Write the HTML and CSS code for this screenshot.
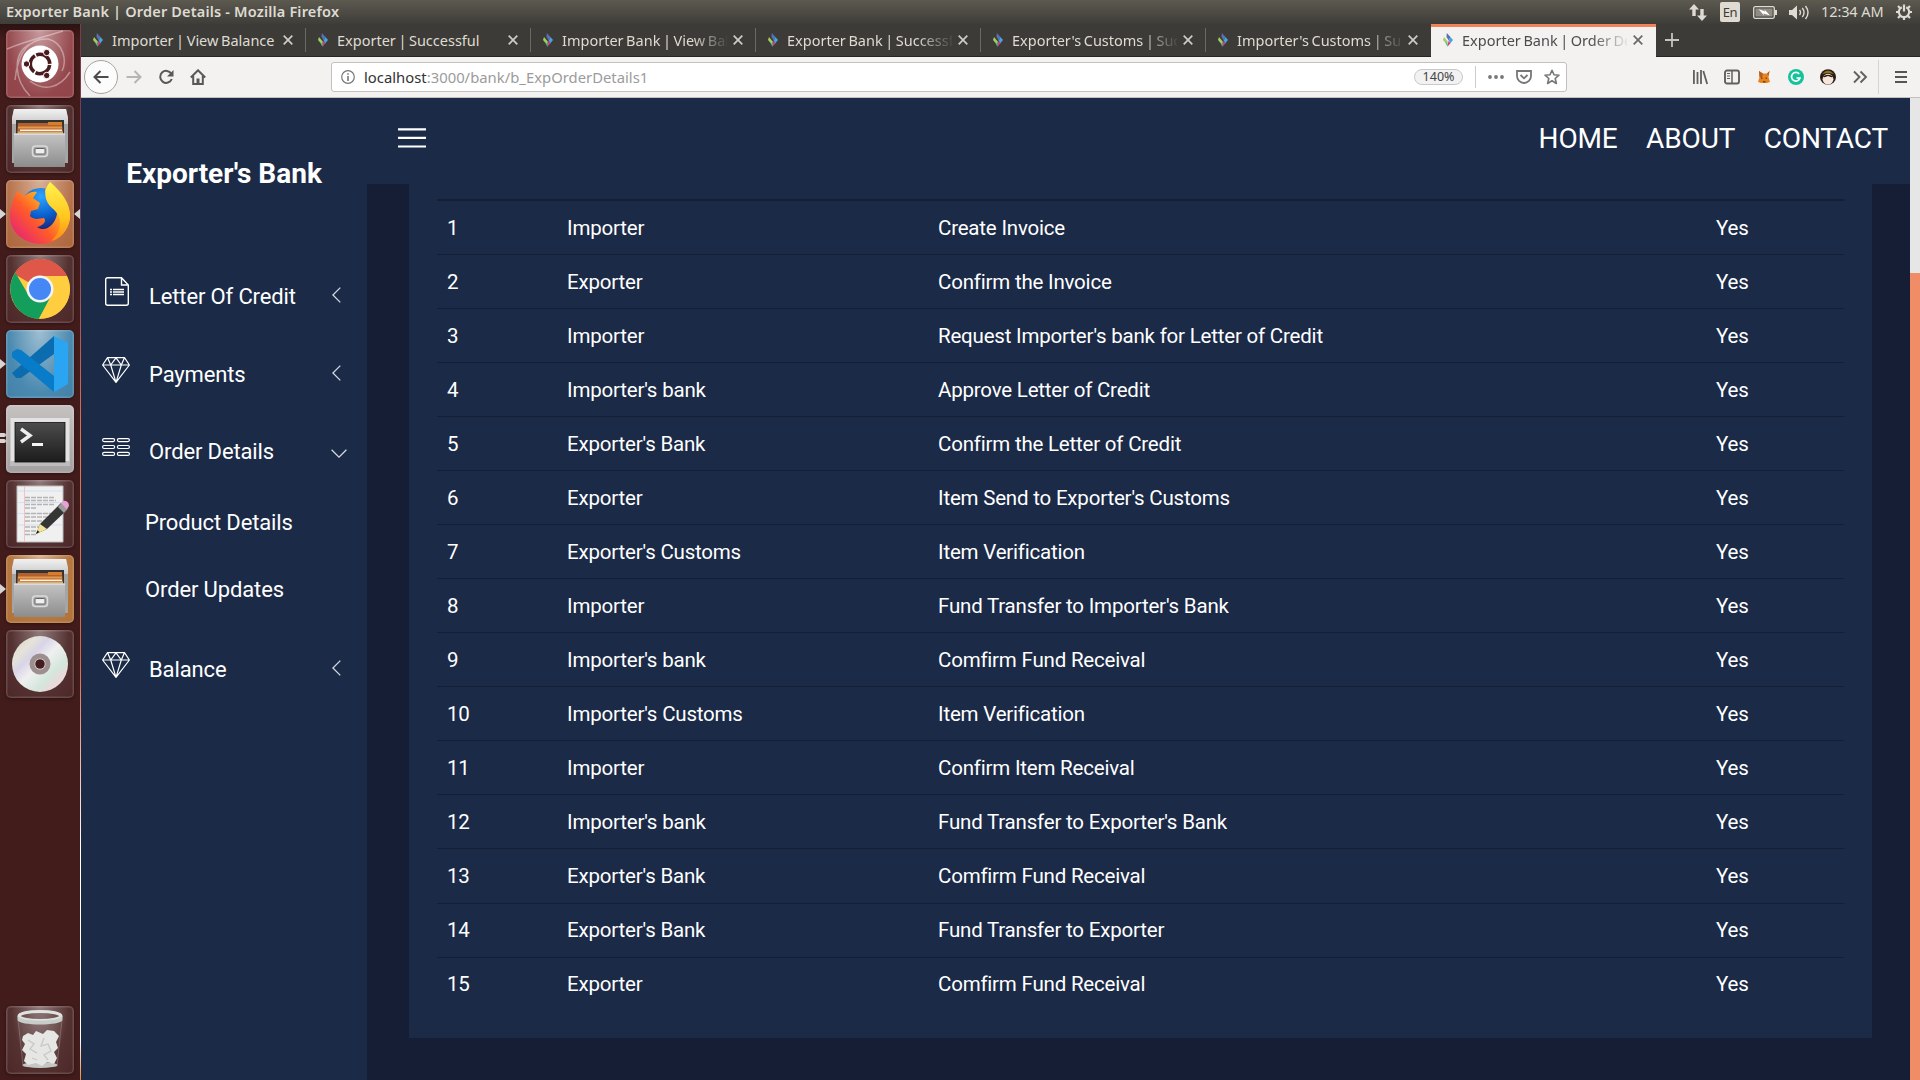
FILE: index.html
```html
<!DOCTYPE html>
<html lang="en">
<head>
<meta charset="utf-8">
<title>Exporter Bank | Order Details</title>
<link rel="stylesheet" href="styles.css">
</head>
<body>
<svg class="defs" aria-hidden="true">
  <defs>
    <linearGradient id="metal" x1="0" y1="0" x2="0" y2="1"><stop offset="0" stop-color="#c4c4c4"/><stop offset="1" stop-color="#8c8c8c"/></linearGradient>
    <linearGradient id="lid" x1="0" y1="0" x2="0" y2="1"><stop offset="0" stop-color="#f2f2f2"/><stop offset="1" stop-color="#c9c9c9"/></linearGradient>
    <linearGradient id="fire" x1="1" y1="0" x2="0" y2="1"><stop offset="0" stop-color="#fff04a"/><stop offset=".35" stop-color="#ffb01f"/><stop offset=".6" stop-color="#ff5a2a"/><stop offset="1" stop-color="#e0148c"/></linearGradient>
    <radialGradient id="globe" cx=".5" cy=".2" r=".9"><stop offset="0" stop-color="#2fa4ff"/><stop offset=".5" stop-color="#0a62d0"/><stop offset="1" stop-color="#1b1464"/></radialGradient>
    <linearGradient id="tail" x1="0" y1="0" x2="0" y2="1"><stop offset="0" stop-color="#fff24f"/><stop offset=".6" stop-color="#ffc61e"/><stop offset="1" stop-color="#ff8a16"/></linearGradient>
    <linearGradient id="screen" x1="0" y1="0" x2="0" y2="1"><stop offset="0" stop-color="#4c4c4c"/><stop offset="1" stop-color="#1c1c1c"/></linearGradient>
    <linearGradient id="disc" x1="0" y1="0" x2="1" y2="1"><stop offset="0" stop-color="#cfcfcf"/><stop offset=".22" stop-color="#e6e4d8"/><stop offset=".35" stop-color="#d9d4e6"/><stop offset=".5" stop-color="#f0f0f0"/><stop offset=".7" stop-color="#d3e6dc"/><stop offset=".8" stop-color="#e8dada"/><stop offset="1" stop-color="#e4e4e4"/></linearGradient>
    <symbol id="favicon" viewBox="0 0 10 14"><path d="M3.800 0 7.500 4 5.800 7.500 3.500 4Z" fill="#5a6fb4"/><path d="M7.500 4 10 7 7.200 10.500 5.800 7.500Z" fill="#4aa3dc"/><path d="M1 4 4.800 8.500 4.300 12 0 7Z" fill="#a4cf5c"/><path d="M2 9 4.800 11 4.500 14Z" fill="#4fbf8a"/><path d="M5.300 8 7.500 10.300 4.600 13.500Z" fill="#d23c96"/></symbol>
    <symbol id="close" viewBox="0 0 10 10"><path d="M.7.7 9.300 9.300M9.300.7.7 9.300" fill="none" stroke="currentColor" stroke-width="1.700"/></symbol>
    <symbol id="diamond" viewBox="0 0 28 26"><path d="M5.500.6H22.500L27.400 8 14 25.400.6 8ZM.6 8H27.400M5.500.6 8.700 8 14 25.400 19.300 8 22.500.6M8.700 8 14 .8 19.300 8" fill="none" stroke="currentColor" stroke-width="1.200" stroke-linejoin="round"/></symbol>
    <symbol id="chev-left" viewBox="0 0 9 16"><path d="M8.300.6.9 8l7.400 7.400" fill="none" stroke="currentColor" stroke-width="1.300"/></symbol>
    <symbol id="cabinet" viewBox="0 0 68 68">
      <path d="M8 4H60L62 13V58H6V13Z" fill="#a5a5a5"/><path d="M8 4H60L62 13V19H6V13Z" fill="url(#lid)"/>
      <path d="M10 15H58V30H10Z" fill="#333"/><path d="M12 18H56L57 29H11Z" fill="#b3602e"/><path d="M42 17H56V20H42Z" fill="#d87e2a"/><path d="M12 21.500H56V23.500H12Z" fill="#e39a4e"/><path d="M14 24.500H56V26H14Z" fill="#fff3dc"/><path d="M12 26.500H57V29H12Z" fill="#dcae6c"/>
      <path d="M8 28.500H59V62H8Z" fill="url(#metal)"/><path d="M8 28.500H59V30H8Z" fill="#dadada"/>
      <rect x="26.500" y="41" width="15" height="10.500" rx="3" fill="#a8a8a8" stroke="#dcdcdc" stroke-width="1.500"/><rect x="29" y="43.500" width="10" height="5.500" rx="1" fill="#efefef" stroke="#666"/>
    </symbol>
  </defs>
</svg>

<header class="panel">
  <div class="panel-title">Exporter Bank | Order Details - Mozilla Firefox</div>
  <div class="tray">
    <svg class="tray-net" width="18" height="17" viewBox="0 0 18 17" fill="#dfdbd2"><path d="M5 0 10 5.500H6.700V12H3.300V5.500H0ZM13 17 8 11.500H11.300V5H14.700V11.500H18Z"/></svg>
    <span class="tray-lang">En</span>
    <svg class="tray-bat" width="24" height="13" viewBox="0 0 24 13"><rect x=".7" y=".7" width="20.600" height="11.600" rx="1.500" fill="none" stroke="#dfdbd2" stroke-width="1.300"/><rect x="2.500" y="2.500" width="17" height="8" fill="#8f8c84"/><path d="M22 4h2v5h-2z" fill="#dfdbd2"/><path d="M5.500 3 12 5.500 11.500 3.500 17 9.500 10.500 7.500 11 9.500Z" fill="#fff"/></svg>
    <svg class="tray-vol" width="21" height="15" viewBox="0 0 21 15"><path d="M0 5h3l5-4.500v14L3 10H0z" fill="#dfdbd2"/><path d="M10.500 5q2 2.500 0 5M13.300 3q3.500 4.500 0 9M16.500 1q5 6.500 0 13" fill="none" stroke="#dfdbd2" stroke-width="1.400"/></svg>
    <span class="tray-clock">12:34 AM</span>
    <svg width="16" height="16" viewBox="0 0 16 16" fill="none" stroke="#dfdbd2"><path d="M5.800 3.300A5.200 5.200 0 1 0 10.200 3.300" stroke-width="2.200"/><path d="M8 .5V7.500" stroke-width="2.200"/><path d="M4 4 2 2M12 4 14 2M3 8H0M13 8H16M4 12 2 14M12 12 14 14M8 13V16" stroke-width="2.200"/></svg>
  </div>
</header>

<div class="desktop">
  <nav class="launcher">
    <div class="tile tile-dash"><svg viewBox="0 0 68 68"><path d="M9 50C12 20 25 8 42 9 58 13 61 31 56 41M24 66C9 51 5 24 24 14M64 42C54 58 38 62 24 51M1 19C20 11 38 7 57 1" fill="none" stroke="#fff" stroke-opacity=".38" stroke-width="1.500"/><circle cx="34" cy="34" r="18.500" fill="#fff"/><circle cx="34" cy="34" r="9.700" fill="none" stroke="#4b1a20" stroke-width="3.600" stroke-dasharray="18.800 1.500" stroke-dashoffset="-1"/><g fill="#4b1a20" stroke="#fff" stroke-width="1"><circle cx="20.500" cy="34" r="3.200"/><circle cx="40.700" cy="22.500" r="3.200"/><circle cx="40.700" cy="45.500" r="3.200"/></g></svg></div>
    <div class="tile"><svg viewBox="0 0 68 68"><use href="#cabinet"/></svg></div>
    <div class="tile tile-fox"><i class="pip"></i><i class="pip pip-right"></i><svg viewBox="0 0 68 68"><circle cx="35" cy="29" r="21" fill="url(#globe)"/><path d="M8 18 11 11 18 16C23 12 28 11 31 12L27 18 34 23 32 29 25 31 24 36C28 40 32 39 38 38 41 41 37 46 31 47 39 53 49 45 51 34 51 22 38 18 39 10L44 2C56 12 65 24 64 38 62 53 50 64 35 64 17 63 4 52 4 36 4 29 6 25 8 18Z" fill="url(#fire)"/><path d="M44 2C55 12 65 25 64 38 62 51 54 59 45 61 58 49 56 36 46 28 38 21 37 10 44 2Z" fill="url(#tail)"/></svg></div>
    <div class="tile"><svg viewBox="0 0 68 68"><circle cx="34" cy="34" r="29.800" fill="#ffcd40"/><path d="M34 34 8.200 19.100A29.800 29.800 0 0 1 61 21H34Z" fill="#de5748"/><path d="M45 41 33 63.800A29.800 29.800 0 0 1 9.300 17.500L23 41 34 47Z" fill="#149e5b"/><path d="M34 21H61A29.800 29.800 0 0 1 33 63.800L45.500 41Z" fill="#ffcd40"/><circle cx="34" cy="34" r="13.500" fill="#f4f4f4"/><circle cx="34" cy="34" r="11" fill="#4587f4"/></svg></div>
    <div class="tile tile-code"><i class="pip"></i><svg viewBox="0 0 68 68"><path d="M48 6 6 43 10 48 15 48 48 24Z" fill="#0b6db0"/><path d="M6 22 11 19 15 20 48 46V62L6 27Z" fill="#087bc9"/><path d="M48 6 62 13V54L48 62Z" fill="#2aa5f2"/></svg></div>
    <div class="tile tile-term"><i class="pip pip-bar"></i><i class="pip pip-bar pip-low"></i><svg viewBox="0 0 68 68"><rect x="4.500" y="13" width="59" height="48" fill="#e2e2e2"/><path d="M4.500 61H63.500V56H4.500Z" fill="#bcbcbc"/><rect x="9" y="17.500" width="50" height="39.500" fill="url(#screen)" stroke="#111" stroke-width=".8"/><path d="M15 24 24 30.500 15 37" fill="none" stroke="#eee" stroke-width="3.400"/><path d="M26 38H37V41H26Z" fill="#f4f4f4"/></svg></div>
    <div class="tile"><svg viewBox="0 0 68 68"><path d="M11 6H57V62H11Z" fill="#f0f0f0" stroke="#bbb"/><path d="M12 11H56M12 22.500H56M12 33.500H56M12 45H56" stroke="#d3dff2"/><path d="M18.500 6V62" stroke="#f4c2c2"/><path d="M19 17.500H48M19 20.500H50M19 24.500H49M19 28H30M19 33.500H50M19 37H48M19 41H45M19 47H38M19 51H34M19 54.500H31" stroke="#b4b4b4" stroke-width="1.300" stroke-dasharray="5 1"/><path d="M30 54 34 44 55 23 62 29 41 49Z" fill="#353535"/><path d="M30 54 34 44 41 49Z" fill="#f2e396"/><path d="M30 54 31.500 50.500 33.500 52Z" fill="#111"/><path d="M52 27 56 22.500 62 28.500 58 33Z" fill="#9d9d9d"/><path d="M55 23 57 21C61 20 64 24 62.500 27L60.500 29Z" fill="#e7a0d6"/></svg></div>
    <div class="tile tile-files"><i class="pip"></i><svg viewBox="0 0 68 68"><use href="#cabinet"/></svg></div>
    <div class="tile"><svg viewBox="0 0 68 68"><circle cx="34" cy="34" r="28" fill="url(#disc)"/><circle cx="34" cy="34" r="8" fill="none" stroke="#9d8f8f" stroke-width="5"/><circle cx="34" cy="34" r="4.800" fill="#451d1f"/></svg></div>
    <div class="tile tile-trash"><svg viewBox="0 0 68 68"><path d="M12 14 17 60H51L56 14Z" fill="#fff" fill-opacity=".05" stroke="#fff" stroke-opacity=".2"/><ellipse cx="34" cy="59" rx="17.500" ry="3" fill="#c3c8c4"/><path d="M17 30 22 27 27 29 30 25 37 28 41 24 48 25 53 30 50 36 52 42 48 46 51 52 48 58 41 56 36 60 30 57 22 59 18 55 20 48 16 44 19 38 16 34Z" fill="#e6e6e4"/><path d="M22 34 28 38 24 43 31 47M38 32 35 40 42 38 45 45 38 49 42 54M26 52 31 54" fill="none" stroke="#c8c8c6" stroke-width="1.300"/><ellipse cx="34" cy="10" rx="21" ry="4.500" fill="none" stroke="#dfe3df" stroke-width="3"/><path d="M11.500 10V14C13 20 55 20 56.500 14V10C53 16 15 16 11.500 10Z" fill="#c9cdc9"/></svg></div>
  </nav>

  <div class="browser">
    <div class="tabs">
      <div class="tab"><svg class="fav"><use href="#favicon"/></svg><span class="tab-label">Importer | View Balance</span><svg class="x"><use href="#close"/></svg></div>
      <div class="tab"><svg class="fav"><use href="#favicon"/></svg><span class="tab-label">Exporter | Successful</span><svg class="x"><use href="#close"/></svg></div>
      <div class="tab"><svg class="fav"><use href="#favicon"/></svg><span class="tab-label fade">Importer Bank | View Balance</span><svg class="x"><use href="#close"/></svg></div>
      <div class="tab"><svg class="fav"><use href="#favicon"/></svg><span class="tab-label fade">Exporter Bank | Successful</span><svg class="x"><use href="#close"/></svg></div>
      <div class="tab"><svg class="fav"><use href="#favicon"/></svg><span class="tab-label fade">Exporter's Customs | Successful</span><svg class="x"><use href="#close"/></svg></div>
      <div class="tab"><svg class="fav"><use href="#favicon"/></svg><span class="tab-label fade">Importer's Customs | Successful</span><svg class="x"><use href="#close"/></svg></div>
      <div class="tab active"><svg class="fav"><use href="#favicon"/></svg><span class="tab-label fade">Exporter Bank | Order Details</span><svg class="x"><use href="#close"/></svg></div>
      <svg class="newtab" width="14" height="14" viewBox="0 0 14 14"><path d="M7 0V14M0 7H14" stroke="#c6c4be" stroke-width="1.800"/></svg>
    </div>

    <div class="toolbar">
      <div class="nav-buttons">
        <span class="back"><svg width="16" height="16" viewBox="0 0 16 16"><path d="M15.500 8H1.500M7.500 2 1.500 8l6 6" fill="none" stroke="#4c4c4c" stroke-width="2"/></svg></span>
        <svg width="16" height="16" viewBox="0 0 16 16"><path d="M.5 8H14.500M8.500 2l6 6-6 6" fill="none" stroke="#b6b5b3" stroke-width="2"/></svg>
        <svg width="16" height="16" viewBox="0 0 16 16"><path d="M13.300 4.700A6 6 0 1 0 13.800 10" fill="none" stroke="#585858" stroke-width="2"/><path d="M15.500 1V7.500H9Z" fill="#585858"/></svg>
        <svg width="16" height="16" viewBox="0 0 16 16"><path d="M.8 8.500 8 1.300 15.200 8.500M3.200 7V15H12.800V7" fill="none" stroke="#585858" stroke-width="2"/><path d="M6.500 9.500h3V15h-3z" fill="#585858"/></svg>
      </div>
      <div class="urlbar">
        <svg class="info" width="14" height="14" viewBox="0 0 14 14"><circle cx="7" cy="7" r="6.300" fill="none" stroke="#777" stroke-width="1.200"/><path d="M6.200 6h1.600v5H6.200zM6.200 3.200h1.600v1.600H6.200z" fill="#777"/></svg>
        <span class="url"><b>localhost</b>:3000/bank/b_ExpOrderDetails1</span>
        <span class="zoom">140%</span>
        <span class="url-sep"></span>
        <svg width="16" height="16" viewBox="0 0 16 16" fill="#777"><circle cx="2" cy="8" r="1.900"/><circle cx="8" cy="8" r="1.900"/><circle cx="14" cy="8" r="1.900"/></svg>
        <svg width="16" height="16" viewBox="0 0 16 16" fill="none" stroke="#777" stroke-width="1.800"><path d="M1 2H15V7A7 7 0 0 1 1 7Z"/><path d="M4.500 6 8 9.300 11.500 6"/></svg>
        <svg width="16" height="16" viewBox="0 0 16 16"><path d="M8 1.300 10 5.800 15 6.200 11.200 9.500 12.400 14.500 8 11.800 3.600 14.500 4.800 9.500 1 6.200 6 5.800Z" fill="none" stroke="#777" stroke-width="1.600" stroke-linejoin="round"/></svg>
      </div>
      <div class="addons">
        <svg width="16" height="16" viewBox="0 0 16 16" stroke="#606060" stroke-width="1.800"><path d="M1.900 1V15M5.500 3V15M9 1V15M11.300 2 15.200 15"/></svg>
        <svg width="16" height="16" viewBox="0 0 16 16" fill="none" stroke="#606060"><rect x="1" y="1.500" width="14" height="13" rx="2" stroke-width="1.900"/><path d="M8 2V14" stroke-width="1.500"/><path d="M3 4.500H6M3 7H6M3 9.500H6"/></svg>
        <svg width="16" height="16" viewBox="0 0 16 16"><path d="M3 2 6 4.500H11L13.500 2 12.500 8 14 13 11 14H5L2 13 3.500 8Z" fill="#e8821e"/><path d="M3 2 7 4.500 6 9 3.500 8ZM13.500 2 11 4.500 12.500 7Z" fill="#b0601c"/><path d="M5 8 7 9.500 5 10ZM11 8 9 9.500 11 10ZM7 12H9.500V13.500H7Z" fill="#7b4517"/></svg>
        <svg width="16" height="16" viewBox="0 0 16 16"><circle cx="8" cy="8" r="8" fill="#15c39a"/><path d="M11.200 5A4.300 4.300 0 1 0 12 9H8.500" fill="none" stroke="#fff" stroke-width="1.700"/></svg>
        <svg width="16" height="16" viewBox="0 0 16 16"><ellipse cx="8" cy="8" rx="8" ry="7.800" fill="#2a1c12"/><path d="M2 5Q8-2 14 5L8 4Z" fill="#8a7128"/><ellipse cx="8" cy="10.200" rx="5.400" ry="5.400" fill="#f6e6dc"/><path d="M2.600 8Q8 3.500 13.400 8L11.500 8.300 8 7 4.500 8.300Z" fill="#2a1c12"/></svg>
        <svg width="16" height="16" viewBox="0 0 16 16" fill="none" stroke="#606060" stroke-width="1.900"><path d="M2 2.500 7.500 8 2 13.500M8.500 2.500 14 8 8.500 13.500"/></svg>
        <span class="menu-sep"></span>
        <svg width="12" height="12" viewBox="0 0 12 12"><path d="M0 1H12M0 6H12M0 11H12" stroke="#555" stroke-width="1.900"/></svg>
      </div>
    </div>

    <div class="page">
      <aside class="sidebar">
        <h3 class="brand">Exporter's Bank</h3>
        <ul class="menu">
          <li class="item"><svg class="ico ico-doc" viewBox="0 0 24 29"><path d="M16.500.7H2.700Q.7.700.7 2.700V26.300Q.7 28.300 2.700 28.300H21.300Q23.300 28.300 23.300 26.300V8ZM16.500.7V8H23.300" fill="none" stroke="currentColor" stroke-width="1.400"/><path d="M5 12.500H7M8 12.500H19M5 15H7M8 15H19M5 17.500H7M8 17.500H19" stroke="currentColor" stroke-width="1.300"/></svg><span>Letter Of Credit</span><svg class="chev"><use href="#chev-left"/></svg></li>
          <li class="item"><svg class="ico"><use href="#diamond"/></svg><span>Payments</span><svg class="chev"><use href="#chev-left"/></svg></li>
          <li class="item item-open"><svg class="ico ico-list" viewBox="0 0 28 18" fill="none" stroke="currentColor" stroke-width="1.200"><rect x=".6" y=".6" width="12" height="3" rx="1.500"/><rect x="15.400" y=".6" width="12" height="3" rx="1.500"/><rect x=".6" y="7.500" width="12" height="3" rx="1.500"/><rect x="15.400" y="7.500" width="12" height="3" rx="1.500"/><rect x=".6" y="14.400" width="12" height="3" rx="1.500"/><rect x="15.400" y="14.400" width="12" height="3" rx="1.500"/></svg><span>Order Details</span><svg class="chev chev-down" viewBox="0 0 16 9"><path d="M.6.700 8 8.100 15.400.7" fill="none" stroke="currentColor" stroke-width="1.300"/></svg></li>
          <li class="sub">Product Details</li>
          <li class="sub">Order Updates</li>
          <li class="item item-last"><svg class="ico"><use href="#diamond"/></svg><span>Balance</span><svg class="chev"><use href="#chev-left"/></svg></li>
        </ul>
      </aside>

      <main class="main">
        <div class="topnav">
          <svg class="burger" width="28" height="20" viewBox="0 0 28 20"><path d="M.5 1.300H27.500M.5 9.800H27.500M.5 18.500H27.500" stroke="#fff" stroke-width="2.200" stroke-linecap="round"/></svg>
          <nav class="links"><a>HOME</a><a>ABOUT</a><a>CONTACT</a></nav>
        </div>
        <section class="card">
          <table class="steps">
            <colgroup><col class="c-no"><col class="c-who"><col class="c-what"><col></colgroup>
            <tbody>
              <tr><td>1</td><td>Importer</td><td>Create Invoice</td><td>Yes</td></tr>
              <tr><td>2</td><td>Exporter</td><td>Confirm the Invoice</td><td>Yes</td></tr>
              <tr><td>3</td><td>Importer</td><td>Request Importer's bank for Letter of Credit</td><td>Yes</td></tr>
              <tr><td>4</td><td>Importer's bank</td><td>Approve Letter of Credit</td><td>Yes</td></tr>
              <tr><td>5</td><td>Exporter's Bank</td><td>Confirm the Letter of Credit</td><td>Yes</td></tr>
              <tr><td>6</td><td>Exporter</td><td>Item Send to Exporter's Customs</td><td>Yes</td></tr>
              <tr><td>7</td><td>Exporter's Customs</td><td>Item Verification</td><td>Yes</td></tr>
              <tr><td>8</td><td>Importer</td><td>Fund Transfer to Importer's Bank</td><td>Yes</td></tr>
              <tr><td>9</td><td>Importer's bank</td><td>Comfirm Fund Receival</td><td>Yes</td></tr>
              <tr><td>10</td><td>Importer's Customs</td><td>Item Verification</td><td>Yes</td></tr>
              <tr><td>11</td><td>Importer</td><td>Confirm Item Receival</td><td>Yes</td></tr>
              <tr><td>12</td><td>Importer's bank</td><td>Fund Transfer to Exporter's Bank</td><td>Yes</td></tr>
              <tr class="tall"><td>13</td><td>Exporter's Bank</td><td>Comfirm Fund Receival</td><td>Yes</td></tr>
              <tr class="late"><td>14</td><td>Exporter's Bank</td><td>Fund Transfer to Exporter</td><td>Yes</td></tr>
              <tr class="late"><td>15</td><td>Exporter</td><td>Comfirm Fund Receival</td><td>Yes</td></tr>
            </tbody>
          </table>
        </section>
      </main>
      <div class="scrollbar"><div class="thumb"></div></div>
    </div>
  </div>
</div>
</body>
</html>
```
FILE: styles.css
```css
* { box-sizing: border-box; }
html, body { margin: 0; height: 100%; overflow: hidden; }
body { display: flex; flex-direction: column; width: 1920px; height: 1080px; font-family: "Noto Sans", sans-serif; font-size: 14.5px; background: #3c3b37; }
svg { display: block; flex: none; }
.defs { position: absolute; width: 0; height: 0; }

/* desktop panel */
.panel { display: flex; justify-content: space-between; height: 24px; flex: none; padding: 0 8px 0 6px; align-items: center; background: linear-gradient(#5c5b4c 0, #59574e 2px, #3e3d38 24px); color: #dfdbd2; }
.panel-title { font-weight: 600; white-space: nowrap; line-height: 22px; height: 24px; letter-spacing: .18px; }
.tray { display: flex; align-items: center; }
.tray-lang { width: 20px; height: 20px; margin: -1px 13px 0 13px; border-radius: 2px; background: #dfdbd2; color: #3c3b37; font-size: 13px; line-height: 20px; text-align: center; letter-spacing: -.5px; }
.tray-vol { margin: 0 11px 0 12px; }
.tray-clock { width: 62px; height: 24px; line-height: 22px; margin-right: 13px; white-space: nowrap; letter-spacing: -.1px; }

.desktop { display: flex; flex: 1; min-height: 0; }

/* launcher */
.launcher { display: flex; flex-direction: column; gap: 7px; width: 81px; flex: none; padding: 6px 6px; background: linear-gradient(#2c1212, #421b1b 14px); border-right: 1px solid; border-image: linear-gradient(#7b3c50 0 15%, #6b4168 18%, #f07048 40%, #e0603c 60%, #fff 78% 96%, #f08030) 1; }
.tile { position: relative; width: 68px; height: 68px; flex: none; border-radius: 5px; background: radial-gradient(ellipse at 50% 0, rgba(255,255,255,.42), rgba(255,255,255,.1) 60%, rgba(255,255,255,.05)); box-shadow: inset 0 0 0 1.500px rgba(255,255,255,.15), 0 1px 3px rgba(0,0,0,.3); }
.tile-dash { background: radial-gradient(ellipse at 50% 0, #c79a9d, #94474c 70%, #8f4549); }
.tile-fox { background: radial-gradient(ellipse at 50% 0, #d8b096, #b4704a 70%, #ad6539); }
.tile-code { background: radial-gradient(ellipse at 50% 0, #9fbfd2, #4b8ab0 65%, #4380a8); }
.tile-term { background: linear-gradient(#c6c1c1, #a4a0a0); }
.tile-files { background: radial-gradient(ellipse at 50% 0, #d9b190, #b67840 60%, #b07238); }
.tile-trash { margin-top: auto; }
.pip { position: absolute; left: -6px; top: 29px; border: 5px solid transparent; border-left: 6px solid #d8d4d4; border-right: 0; }
.pip-right { left: auto; right: -6px; border-left: 0; border-right: 6px solid #d8d4d4; }
.pip-bar { top: 28px; width: 6px; height: 4px; border: 0; border-radius: 0 2px 2px 0; background: #d8d4d4; }
.pip-low { top: 34px; }

/* browser chrome */
.browser { display: flex; flex-direction: column; flex: 1; min-width: 0; }
.tabs { display: flex; height: 33px; flex: none; background: #3c3b37; border-bottom: 1px solid #262522; color: #dfdbd2; }
.tab { display: flex; align-items: center; width: 225px; padding: 0 12px; background: linear-gradient(#6b6964, #6b6964) right 4px / 1px 24px no-repeat; }
.tab:nth-child(6) { background: none; }
.tab.active { height: 33px; background: #f4f2f1; border-top: 3px solid #f0835a; padding-bottom: 5px; color: #4c4c4c; }
.fav { width: 10px; height: 14px; margin-right: 9px; }
.tab-label { width: 165px; margin-right: 6px; overflow: hidden; white-space: nowrap; line-height: 20px; word-spacing: -1.200px; }
.fade { -webkit-mask-image: linear-gradient(90deg, #000 130px, transparent 168px); mask-image: linear-gradient(90deg, #000 130px, transparent 168px); }
.x { width: 10px; height: 10px; color: #cfccc5; }
.active .x { color: #686868; }
.newtab { margin: 9px 0 0 9px; }

.toolbar { display: flex; align-items: center; height: 41px; flex: none; padding: 0 13px 0 3px; background: #f4f2f1; border-bottom: 1px solid #c4c1be; }
.nav-buttons { display: flex; align-items: center; width: 247px; gap: 16px; }
.back { display: flex; align-items: center; justify-content: center; width: 34px; height: 34px; margin-right: -8px; border: 1px solid #a5a4a2; border-radius: 50%; background: #fcfcfc; }
.urlbar { display: flex; align-items: center; width: 1236px; height: 30px; padding: 0 6px 0 9px; background: #fff; border: 1px solid #c3c0bd; border-radius: 3px; gap: 12px; }
.info { margin-right: -3px; }
.url { flex: 1; color: #9b9b9b; white-space: nowrap; font-size: 14.800px; letter-spacing: .02px; }
.url b { color: #333; font-weight: 400; }
.zoom { width: 49px; height: 16px; border: 1px solid #c9c9c9; border-radius: 8px; background: #f2f2f2; color: #444; font-size: 12.500px; line-height: 14px; text-align: center; }
.url-sep { width: 1px; height: 22px; background: #ccc; }
.addons { display: flex; align-items: center; gap: 16px; margin-left: auto; }
.menu-sep { width: 1px; height: 34px; margin-left: -6px; background: #d6d4d2; }

/* page */
.page { display: flex; flex: 1; min-height: 0; background: #151e35; color: #fff; font-family: Roboto, sans-serif; }
.sidebar { width: 286px; flex: none; background: #1b2a47; }
.brand { margin: 0; padding-top: 59px; text-align: center; font-size: 28px; line-height: 34px; font-weight: 700; }
.menu { list-style: none; margin: 66px 0 0; padding: 0; font-size: 22px; letter-spacing: -.13px; }
.item { display: flex; align-items: center; height: 78px; padding: 0 20px 0 21px; }
.item span { width: 183px; }
.item-open { height: 76px; }
.ico { width: 28px; height: 26px; margin: -8px 19px 0 0; }
.ico-doc { width: 24px; height: 29px; margin: -9px 20px 0 3px; }
.ico-list { height: 18px; }
.chev { width: 9px; height: 16px; color: #d5d9e2; margin-top: -2px; }
.chev-down { width: 16px; height: 9px; margin-top: 5px; }
.sub { height: 67px; padding-left: 64px; line-height: 68px; }
.item-last { margin-top: 7px; }

.main { display: flex; flex-direction: column; flex: 1; min-width: 0; }
.topnav { display: flex; justify-content: space-between; height: 86px; flex: none; padding: 0 22px 0 31px; background: #1b2a47; }
.burger { margin-top: 30px; }
.links { display: flex; gap: 28.500px; font-size: 28px; line-height: 82px; letter-spacing: -.15px; }
.card { margin: 0 38px 0 42px; height: 854px; padding: 15px 28px 0; background: #1b2a47; }
.steps { width: 100%; table-layout: fixed; border-collapse: separate; border-spacing: 0; border-top: 2px solid #151e35; font-size: 20.500px; letter-spacing: -.2px; }
.c-no { width: 120px; }
.c-who { width: 371px; }
.c-what { width: 778px; }
.steps td { height: 54px; padding: 2px 10px 0; line-height: 31px; border-top: 1px solid #151e35; }
.steps tr:first-child td { border-top: 0; height: 53px; }
.steps .tall td { height: 55px; padding-top: 0; }
.steps .late td { padding-top: 0; }
.scrollbar { width: 10px; flex: none; padding-top: 175px; background: #e6e6e6; }
.thumb { height: 100%; background: #f08c66; }
```
